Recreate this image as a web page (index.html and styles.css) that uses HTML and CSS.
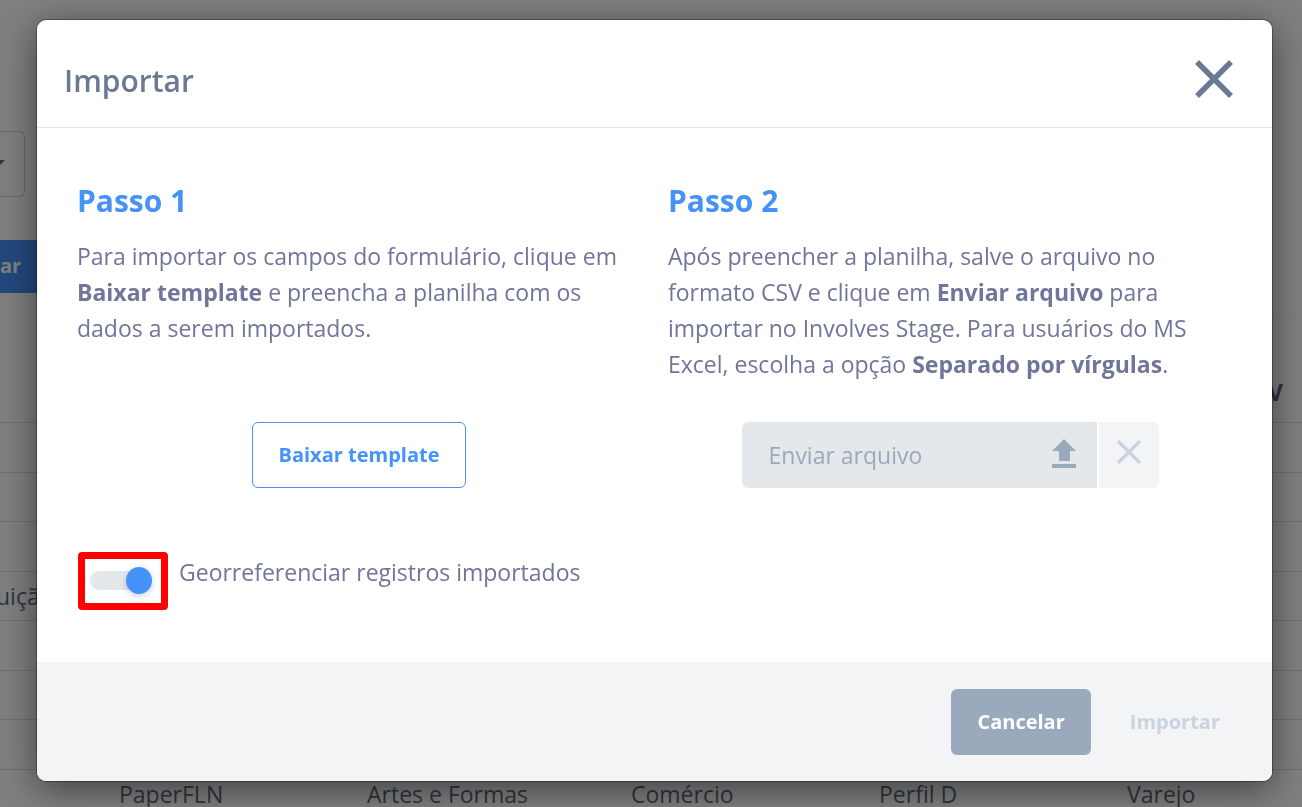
FILE: index.html
```html
<!DOCTYPE html>
<html lang="pt-BR">
<head>
<meta charset="utf-8">
<title>Importar</title>
<link rel="stylesheet" href="styles.css">
</head>
<body>
<main class="page">
  <div class="filter">
    <button class="filter-select" type="button" aria-label="Filtro">
      <svg width="16" height="8" viewBox="0 0 16 8" aria-hidden="true"><path d="M0 0h16L8 8z"/></svg>
    </button>
  </div>
  <div class="toolbar"><button class="toolbar-button" type="button">ar</button></div>
  <table class="grid">
    <thead>
      <tr><th></th><th></th><th></th><th></th><th></th><th class="grid-last">V</th></tr>
    </thead>
    <tbody>
      <tr><td colspan="6"></td></tr>
      <tr><td colspan="6"></td></tr>
      <tr><td colspan="6"></td></tr>
      <tr><td>uição</td><td colspan="5"></td></tr>
      <tr><td colspan="6"></td></tr>
      <tr><td colspan="6"></td></tr>
      <tr><td colspan="6"></td></tr>
      <tr><td></td><td>PaperFLN</td><td>Artes e Formas</td><td>Comércio</td><td>Perfil D</td><td>Varejo</td></tr>
    </tbody>
  </table>
</main>

<div class="overlay">
  <section class="modal" role="dialog" aria-modal="true" aria-labelledby="modal-title">
    <header class="modal-header">
      <h1 class="modal-title" id="modal-title">Importar</h1>
      <button class="close" type="button" aria-label="Fechar">
        <svg width="40" height="40" viewBox="0 0 40 40" aria-hidden="true"><path d="M3 3l34 34M37 3L3 37" stroke="currentColor" stroke-width="5.5"/></svg>
      </button>
    </header>

    <div class="modal-body">
      <div class="steps">
        <section class="step">
          <h2 class="step-title">Passo 1</h2>
          <p class="step-text">Para importar os campos do formulário, clique em <strong>Baixar template</strong> e preencha a planilha com os dados a serem importados.</p>
          <div class="step-action">
            <button class="button button-outline" type="button">Baixar template</button>
          </div>
        </section>
        <section class="step">
          <h2 class="step-title">Passo 2</h2>
          <p class="step-text">Após preencher a planilha, salve o arquivo no formato CSV e clique em <strong>Enviar arquivo</strong> para importar no Involves Stage. Para usuários do MS Excel, escolha a opção <strong>Separado por vírgulas</strong>.</p>
          <div class="step-action">
            <div class="upload">
              <button class="upload-file" type="button">
                <span>Enviar arquivo</span>
                <svg width="24" height="32" viewBox="0 0 24 32" aria-hidden="true"><path d="M12 0l12 12h-6v10H7V12H0zM0 25h24v4H0z" fill="currentColor"/></svg>
              </button>
              <button class="upload-clear" type="button" aria-label="Remover arquivo" disabled>
                <svg width="24" height="24" viewBox="0 0 24 24" aria-hidden="true"><path d="M1 1l22 22M23 1L1 23" stroke="currentColor" stroke-width="3.5"/></svg>
              </button>
            </div>
          </div>
        </section>
      </div>
      <div class="geo">
        <span class="highlight"><input class="switch" type="checkbox" role="switch" id="geo" checked></span>
        <label class="geo-label" for="geo">Georreferenciar registros importados</label>
      </div>
    </div>

    <footer class="modal-footer">
      <button class="button button-cancel" type="button">Cancelar</button>
      <button class="button button-import" type="button" disabled>Importar</button>
    </footer>
  </section>
</div>
</body>
</html>
```
FILE: styles.css
```css
* {
  box-sizing: border-box;
}

body {
  margin: 0;
  height: 100vh;
  overflow: hidden;
  background: #fff;
  color: #5d6b7e;
  font-family: "Open Sans", "Noto Sans", sans-serif;
  font-size: 23px;
}

button {
  margin: 0;
  border: 0;
  font-family: inherit;
}

svg {
  display: block;
}

/* Page behind the dialog */
.page {
  height: 100vh;
  overflow: hidden;
}

.filter {
  padding-top: 131px;
}

.filter-select {
  display: flex;
  align-items: center;
  justify-content: flex-end;
  width: 25px;
  height: 66px;
  padding: 0 19px 0 0;
  border: 1px solid #c8cdd6;
  border-left: 0;
  border-radius: 0 6px 6px 0;
  background: #fff;
  overflow: hidden;
}

.filter-select svg {
  flex: none;
  fill: #506988;
}

.toolbar {
  padding: 43px 0 24px;
}

.toolbar-button {
  display: block;
  width: 60px;
  height: 53px;
  padding: 0 0 2px;
  background: #4593f8;
  color: #fff;
  font-size: 20px;
  font-weight: 700;
  text-align: left;
}

/* The table is scrolled slightly past the left edge */
.grid {
  width: calc(100% + 4px);
  margin-left: -4px;
  border-collapse: collapse;
  table-layout: fixed;
}

.grid th {
  height: 105px;
  padding: 44px 0 0;
  border-top: 1px solid #f6f7f8;
  border-bottom: 1px solid #dfe1e4;
}

.grid th:first-child {
  width: 123px;
}

.grid th:nth-child(3) {
  width: 264px;
}

.grid th:nth-child(2),
.grid th:nth-child(4),
.grid th:nth-child(5) {
  width: 248px;
}

.grid .grid-last {
  padding-right: 19px;
  text-align: right;
}

.grid td {
  height: 50px;
  padding: 0;
  border-bottom: 1px solid #dfe1e4;
  line-height: 32px;
}

.grid tr:nth-child(even) td {
  height: 49px;
}

/* Dialog */
.overlay {
  position: fixed;
  inset: 0;
  padding: 20px 30px 0 37px;
  background: rgba(0, 0, 0, 0.5);
}

.modal {
  border-radius: 9px;
  background: #fff;
  color: #70759a;
  box-shadow: 0 0 0 1px rgba(0, 0, 0, 0.3), 0 8px 36px rgba(0, 0, 0, 0.5);
  overflow: hidden;
}

.modal-header {
  display: flex;
  align-items: center;
  justify-content: space-between;
  padding: 39px 38px 26px 27px;
  border-bottom: 1px solid #e4e7ea;
  color: #6a7a92;
}

.modal-title {
  margin: 0;
  font-size: 30px;
  font-weight: 600;
  line-height: 41px;
}

.close {
  padding: 0 0 2px;
  background: none;
  color: inherit;
}

.modal-body {
  padding: 48px 40px 52px;
}

.steps {
  display: grid;
  grid-template-columns: 1fr 1fr;
  gap: 27px;
}

.step {
  display: flex;
  flex-direction: column;
}

.step-title {
  margin: 0 0 12px;
  color: #4593f8;
  font-size: 30px;
  font-weight: 700;
  line-height: 50px;
}

.step-text {
  flex: 1;
  margin: 0;
  line-height: 36px;
}

.step-action {
  display: flex;
  justify-content: center;
  padding-top: 40px;
}

.button {
  height: 66px;
  padding: 0 25px 2px;
  border: 1px solid transparent;
  border-radius: 6px;
  font-size: 20px;
  font-weight: 700;
}

.button-outline {
  border-color: #4593f8;
  background: #fff;
  color: #4593f8;
}

.upload {
  display: flex;
  gap: 2px;
  height: 66px;
}

.upload-file {
  display: flex;
  align-items: center;
  justify-content: space-between;
  width: 355px;
  padding: 0 21px 0 27px;
  border-radius: 6px 0 0 6px;
  background: #e4e8eb;
  color: #9ba9bd;
  font-size: 23px;
}

.upload-clear {
  padding: 0 18px 6px;
  border-radius: 0 6px 6px 0;
  background: #f3f4f6;
  color: #cbd3de;
}

.geo {
  display: flex;
  align-items: flex-start;
  gap: 11px;
  padding: 64px 0 0 1px;
}

.highlight {
  display: flex;
  align-items: center;
  width: 90px;
  height: 58px;
  padding: 0 0 1px 5px;
  border: 7px solid #f00;
  border-radius: 4px;
}

.switch {
  appearance: none;
  display: flex;
  align-items: center;
  justify-content: flex-end;
  width: 62px;
  height: 19px;
  margin: 0;
  border-radius: 10px;
  background: #e4e8eb;
}

.switch::before {
  content: "";
  width: 26px;
  height: 27px;
  flex: none;
  border-radius: 50%;
  background: #4593f8;
  box-shadow: 0 2px 6px rgba(69, 100, 160, 0.3);
}

.geo-label {
  line-height: 40px;
}

.modal-footer {
  display: flex;
  justify-content: flex-end;
  gap: 13px;
  padding: 27px 26px 26px;
  background: #f3f4f6;
}

.button-cancel {
  background: #9ba9bd;
  color: #fff;
}

.button-import {
  background: transparent;
  color: #cbd3de;
}
```
